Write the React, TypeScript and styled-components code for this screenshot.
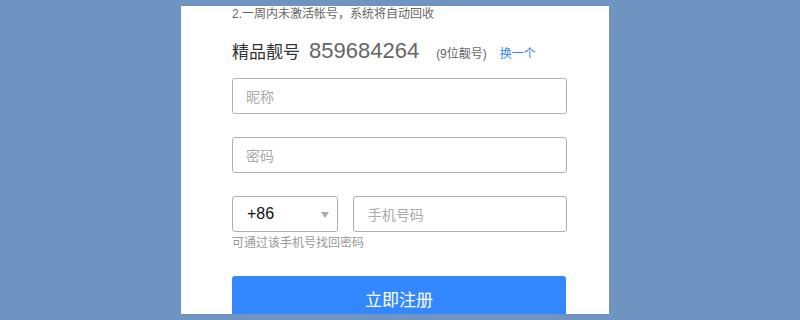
import React from "react";
import styled, { createGlobalStyle } from "styled-components";

const Global = createGlobalStyle`
  html, body { margin: 0; padding: 0; background: #7094c1; }
  body { font-family: "Liberation Sans", "Noto Sans CJK SC", sans-serif; }
  * { box-sizing: border-box; }
`;

const Page = styled.div`
  width: 800px;
  height: 320px;
  padding: 6px 0 0 181px;
  overflow: hidden;
`;

const Panel = styled.div`
  width: 428px;
  height: 308px;
  background: #fff;
  padding: 0 42px 0 51px;
  overflow: hidden;
  display: flex;
  flex-direction: column;
  & > * { flex-shrink: 0; }
`;

const Notice = styled.div`
  font-size: 12px;
  line-height: 16px;
  color: #666;
`;

const NumberRow = styled.div`
  display: flex;
  align-items: baseline;
  margin-top: 14px;
  height: 30px;
  line-height: 30px;
`;

const Label = styled.span`
  font-size: 17px;
  color: #333;
  margin-right: 9px;
`;

const BigNumber = styled.span`
  font-size: 22px;
  color: #666;
  margin-right: 17px;
`;

const Small = styled.span<{ $link?: boolean }>`
  font-size: 12px;
  color: ${(p) => (p.$link ? "#2f86f6" : "#666")};
  margin-right: 13px;
`;

const Field = styled.div<{ $width?: number; $gap?: number }>`
  width: ${(p) => (p.$width ? `${p.$width}px` : "335px")};
  height: 36px;
  border: 1px solid #b0b0b0;
  border-radius: 3px;
  margin-top: ${(p) => (p.$gap ?? 0)}px;
  display: flex;
  align-items: center;
  padding-left: 13px;
  font-size: 14px;
  color: #aaa;
`;

const PhoneRow = styled.div`
  display: flex;
  gap: 15px;
  margin-top: 23px;
`;

const SelectBox = styled.div`
  width: 106px;
  height: 36px;
  border: 1px solid #b0b0b0;
  border-radius: 3px;
  display: flex;
  align-items: center;
  justify-content: space-between;
  padding: 0 8px 0 14px;
  font-size: 16px;
  color: #111;
`;

const Arrow = styled.span`
  width: 0;
  height: 0;
  border-left: 4px solid transparent;
  border-right: 4px solid transparent;
  border-top: 6px solid #aaa;
  margin-top: 2px;
`;

const PhoneField = styled(Field)`
  width: 215px;
  padding-left: 14px;
`;

const Hint = styled.div`
  font-size: 12px;
  line-height: 16px;
  color: #999;
  margin-top: 3px;
`;

const Submit = styled.button`
  width: 334px;
  height: 44px;
  margin-top: 25px;
  border: none;
  border-radius: 3px;
  background: #3388ff;
  color: #fff;
  font-family: "Liberation Sans", "Noto Sans CJK SC", sans-serif;
  font-size: 17px;
  padding: 0;
`;

export default function App() {
  return (
    <Page>
      <Global />
      <Panel>
        <Notice>2.一周内未激活帐号，系统将自动回收</Notice>
        <NumberRow>
          <Label>精品靓号</Label>
          <BigNumber>859684264</BigNumber>
          <Small>(9位靓号)</Small>
          <Small $link>换一个</Small>
        </NumberRow>
        <Field $gap={12}>昵称</Field>
        <Field $gap={23}>密码</Field>
        <PhoneRow>
          <SelectBox>
            +86
            <Arrow />
          </SelectBox>
          <PhoneField>手机号码</PhoneField>
        </PhoneRow>
        <Hint>可通过该手机号找回密码</Hint>
        <Submit>立即注册</Submit>
      </Panel>
    </Page>
  );
}
